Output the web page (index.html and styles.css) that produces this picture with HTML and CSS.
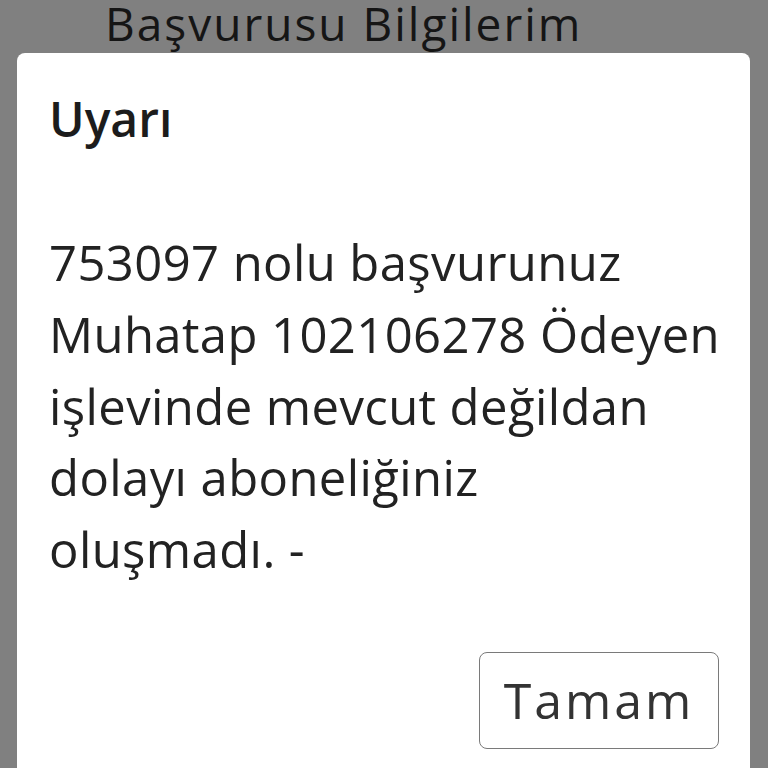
FILE: index.html
```html
<!DOCTYPE html>
<html lang="tr">
<head>
<meta charset="utf-8">
<title>Uyarı</title>
<link rel="stylesheet" href="styles.css">
</head>
<body>
<div class="screen">
  <h1 class="page-title">Başvurusu Bilgilerim</h1>
  <div class="modal" role="dialog">
    <h2 class="modal-title">Uyarı</h2>
    <p class="modal-message">753097 nolu başvurunuz Muhatap 102106278 Ödeyen işlevinde mevcut değildan dolayı aboneliğiniz oluşmadı.&nbsp;-</p>
    <div class="modal-actions">
      <button class="btn-ok" type="button">Tamam</button>
    </div>
  </div>
</div>
</body>
</html>
```
FILE: styles.css
```css
html, body {
  margin: 0;
  padding: 0;
}
body {
  background: #808080;
  font-family: "Open Sans", "Noto Sans", sans-serif;
  overflow: hidden;
}
.screen {
  width: 768px;
  height: 768px;
  overflow: hidden;
}
.page-title {
  margin: 0;
  padding: 0 0 6px 105px;
  font-size: 46px;
  line-height: 47px;
  letter-spacing: 2px;
  font-weight: 400;
  color: #151515;
}
.modal {
  margin: 0 18px 0 17px;
  background: #ffffff;
  border-radius: 8px;
  padding: 38px 31px 40px 32px;
  height: 760px;
  box-sizing: border-box;
}
.modal-title {
  margin: 0;
  font-size: 48px;
  line-height: 56px;
  font-weight: 600;
  color: #1c1c1c;
}
.modal-message {
  margin: 80px -14px 0 0;
  font-size: 49px;
  line-height: 71.75px;
  letter-spacing: 0.4px;
  color: #222222;
}
.modal-actions {
  display: flex;
  justify-content: flex-end;
  margin-top: 66px;
}
.btn-ok {
  width: 240px;
  height: 97px;
  background: #ffffff;
  border: 1px solid #7a7a7a;
  border-radius: 8px;
  font-family: inherit;
  font-size: 50px;
  letter-spacing: 3px;
  color: #333333;
  padding: 0;
}
```
